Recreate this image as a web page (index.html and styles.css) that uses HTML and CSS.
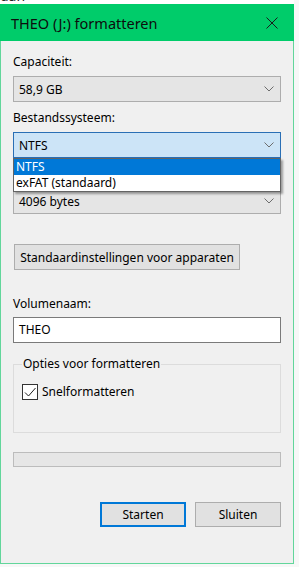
FILE: index.html
```html
<!DOCTYPE html>
<html lang="nl">
<head>
<meta charset="utf-8">
<title>THEO (J:) formatteren</title>
<link rel="stylesheet" href="styles.css">
</head>
<body>
<div class="top-strip"><span>dan</span></div>
<div class="window">
  <div class="titlebar">
    <span class="title">THEO (J:) formatteren</span>
    <svg class="close" width="12" height="12" viewBox="0 0 12 12"><path d="M0.5 0.5 L11.5 11.5 M11.5 0.5 L0.5 11.5" stroke="#1b1b1b" stroke-width="1" fill="none"/></svg>
  </div>
  <div class="content">
    <div class="field">
      <div class="label">Capaciteit:</div>
      <div class="combo"><span>58,9 GB</span><svg class="chev" width="10" height="6" viewBox="0 0 10 6"><path d="M0.5 0.5 L5 5 L9.5 0.5" stroke="#6d6d6d" fill="none"/></svg></div>
    </div>
    <div class="field">
      <div class="label">Bestandssysteem:</div>
      <div class="combo-wrap">
        <div class="combo focus"><span>NTFS</span><svg class="chev" width="10" height="6" viewBox="0 0 10 6"><path d="M0.5 0.5 L5 5 L9.5 0.5" stroke="#6d6d6d" fill="none"/></svg></div>
        <ul class="dropdown">
          <li class="selected">NTFS</li>
          <li>exFAT (standaard)</li>
        </ul>
      </div>
    </div>
    <div class="field">
      <div class="label"></div>
      <div class="combo"><span>4096 bytes</span><svg class="chev" width="10" height="6" viewBox="0 0 10 6"><path d="M0.5 0.5 L5 5 L9.5 0.5" stroke="#6d6d6d" fill="none"/></svg></div>
    </div>
    <button class="btn defaults">Standaardinstellingen voor apparaten</button>
    <div class="field volume">
      <div class="label">Volumenaam:</div>
      <div class="input">THEO</div>
    </div>
    <fieldset class="group">
      <legend>Opties voor formatteren</legend>
      <div class="check">
        <span class="box"><svg width="14" height="14" viewBox="0 0 14 14"><path d="M2 7.5 L5.5 11 L12.5 3" stroke="#1f1f1f" stroke-width="1" fill="none"/></svg></span>
        <span>Snelformatteren</span>
      </div>
    </fieldset>
    <div class="progress"></div>
    <div class="actions">
      <button class="btn primary">Starten</button>
      <button class="btn">Sluiten</button>
    </div>
  </div>
</div>
</body>
</html>
```
FILE: styles.css
```css
* { box-sizing: border-box; }
html, body { margin: 0; padding: 0; }
body {
  width: 299px;
  height: 567px;
  overflow: hidden;
  background: #f7f7f7;
  font-family: "Noto Sans", "Open Sans", sans-serif;
  font-size: 12px;
  color: #000;
}
.top-strip {
  height: 4px;
  width: 294px;
  background: #ffffff;
  overflow: hidden;
  position: relative;
}
.top-strip span {
  position: absolute;
  left: 0;
  top: -11px;
  font-size: 14px;
  line-height: 14px;
  color: #222;
}
.window {
  width: 294px;
  height: 560px;
  background: #f0f0f0;
  border: 1px solid #62d69b;
  border-top: none;
}
.titlebar {
  height: 37px;
  margin: 0 -1px;
  background: #00cc6a;
  display: flex;
  align-items: center;
  justify-content: space-between;
  padding: 0 16px 0 11px;
}
.title {
  font-size: 14.5px;
  color: #0d0d0d;
  line-height: 20px;
}
.close { display: block; margin-top: 1px; }
.content {
  padding: 13px 12px 0 12px;
}
.label {
  line-height: 16px;
  height: 16px;
}
.field { margin-top: 8px; }
.field:first-child { margin-top: 0; }
.field .label { margin-bottom: 6px; }
.combo {
  height: 26px;
  border: 1px solid #adadad;
  background: #e5e5e5;
  display: flex;
  align-items: center;
  justify-content: space-between;
  padding: 0 6px 0 5px;
}
.combo.focus {
  background: #cce4f7;
  border-color: #2a6fb5;
}
.chev { display: block; }
.combo-wrap { position: relative; }
.dropdown {
  position: absolute;
  left: 0;
  top: 26px;
  width: 268px;
  margin: 0;
  padding: 0;
  list-style: none;
  background: #fff;
  border: 1px solid #646464;
  box-shadow: 2px 2px 2px rgba(0,0,0,0.35);
  z-index: 2;
}
.dropdown li {
  height: 16px;
  line-height: 16px;
  padding-left: 2px;
}
.dropdown li.selected {
  background: #0078d7;
  color: #fff;
}
.btn {
  font-family: inherit;
  font-size: 12px;
  color: #000;
  background: #e1e1e1;
  border: 1px solid #adadad;
  height: 26px;
  padding: 0;
  margin: 0;
}
.defaults {
  display: block;
  margin-top: 30px;
  width: 226px;
  margin-left: 1px;
}
.volume { margin-top: 26px; }
.volume .label { margin-bottom: 5px; }
.input {
  height: 26px;
  border: 1px solid #7a7a7a;
  background: #fff;
  padding: 0 5px;
  line-height: 24px;
}
.group {
  margin: 13px 0 0 0;
  padding: 0 0 0 8px;
  border: 1px solid #dcdcdc;
  height: 77px;
}
.group legend {
  padding: 0 1px;
  margin-left: 0;
  line-height: 16px;
}
.check {
  display: flex;
  align-items: center;
  gap: 4px;
  margin-top: 11px;
}
.box {
  width: 16px;
  height: 16px;
  border: 1px solid #333;
  background: #fff;
  display: flex;
  align-items: center;
  justify-content: center;
}
.box svg { display: block; }
.progress {
  margin-top: 19px;
  height: 15px;
  background: #e6e6e6;
  border: 1px solid #bcbcbc;
}
.actions {
  display: flex;
  justify-content: flex-end;
  gap: 9px;
  margin-top: 35px;
}
.actions .btn {
  width: 86px;
  height: 25px;
}
.actions .btn.primary {
  border: 2px solid #0078d7;
}
```
